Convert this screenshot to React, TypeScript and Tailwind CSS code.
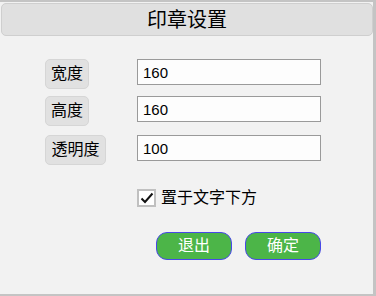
import React, { useState } from 'react';

const font = { fontFamily: '"Liberation Sans", "Noto Sans CJK SC", sans-serif' };

const fields = [
  { label: '宽度', value: '160', w: 'w-[44px]', mt: 'mt-[23px]' },
  { label: '高度', value: '160', w: 'w-[44px]', mt: 'mt-[7px]' },
  { label: '透明度', value: '100', w: 'w-[61px]', mt: 'mt-[9px]' },
];

const App: React.FC = () => {
  const [values, setValues] = useState(fields.map((f) => f.value));
  const [below, setBelow] = useState(true);

  return (
    <div
      className="w-[376px] h-[296px] bg-[#f2f2f2] border-t-2 border-r-[3px] border-b-2 border-[#c4c4c4] flex flex-col text-black"
      style={font}
    >
      {/* title bar */}
      <div className="ml-px mt-px h-[33px] bg-[#e0e0e0] border border-[#cfcfcf] rounded-[5px] flex items-center justify-center text-[20px] leading-none">
        印章设置
      </div>

      {fields.map((f, i) => (
        <div key={f.label} className={`flex items-start ${f.mt}`}>
          <div
            className={`ml-[45px] ${f.w} h-[30px] bg-[#e1e1e1] border border-[#d6d6d6] rounded-[5px] flex items-center justify-center text-[16px]`}
          >
            {f.label}
          </div>
          <input
            value={values[i]}
            onChange={(e) => setValues(values.map((v, j) => (j === i ? e.target.value : v)))}
            className={`${i === 2 ? 'ml-[31px]' : 'ml-[48px]'} w-[184px] h-[26px] bg-[#fdfdfd] border border-[#9a9a9a] px-[5px] text-[15px] outline-none`}
          />
        </div>
      ))}

      <label className="ml-[137px] mt-[21px] flex items-center gap-[5px] text-[16px] cursor-pointer">
        <span
          onClick={() => setBelow(!below)}
          className="w-[19px] h-[18px] border-2 border-[#c0c0c0] bg-white flex items-center justify-center"
        >
          {below && (
            <svg width="14" height="12" viewBox="0 0 14 12">
              <path d="M1.5 6.5 L5 10 L12.5 1.5" fill="none" stroke="#111" strokeWidth="2" />
            </svg>
          )}
        </span>
        置于文字下方
      </label>

      <div className="ml-[156px] mt-[22px] flex gap-[13px]">
        <button className="w-[76px] h-[28px] rounded-[11px] bg-[#4cb548] border border-[#4848e8] text-white text-[16px]">
          退出
        </button>
        <button className="w-[76px] h-[28px] rounded-[11px] bg-[#4cb548] border border-[#4848e8] text-white text-[16px]">
          确定
        </button>
      </div>
    </div>
  );
};

export default App;
